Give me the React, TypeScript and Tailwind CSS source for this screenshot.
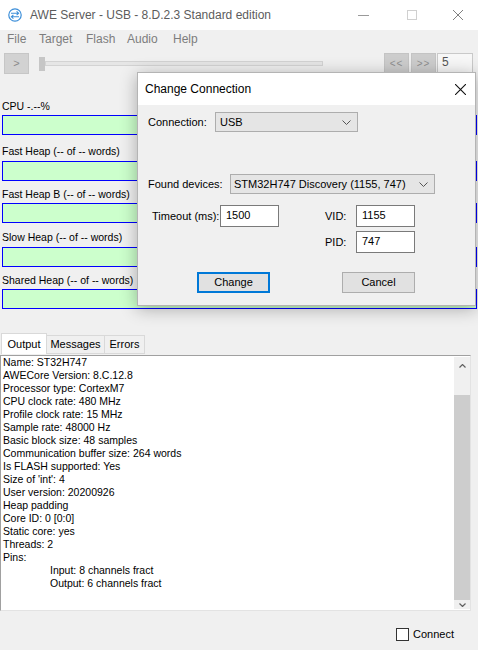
import React from "react";

const lines = [
  "Name: ST32H747",
  "AWECore Version: 8.C.12.8",
  "Processor type: CortexM7",
  "CPU clock rate: 480 MHz",
  "Profile clock rate: 15 MHz",
  "Sample rate: 48000 Hz",
  "Basic block size: 48 samples",
  "Communication buffer size: 264 words",
  "Is FLASH supported: Yes",
  "Size of 'int': 4",
  "User version: 20200926",
  "Heap padding",
  "Core ID: 0 [0:0]",
  "Static core: yes",
  "Threads: 2",
  "Pins:",
];

function Chevron() {
  return (
    <svg width="9" height="5" viewBox="0 0 9 5" className="shrink-0">
      <path d="M0.5 0.5 L4.5 4.5 L8.5 0.5" fill="none" stroke="#555" strokeWidth="1" />
    </svg>
  );
}

function Gauge({ label, labelMt, barMt }: { label: string; labelMt: string; barMt: string }) {
  return (
    <>
      <div className={`${labelMt} h-[14px] leading-[14px] pl-[2px] text-[10.5px] text-black`}>{label}</div>
      <div className={`${barMt} ml-[2px] w-[475px] h-[20px] bg-[#ccffcc] border border-[#0000ff]`} />
    </>
  );
}

export default function App() {
  return (
    <div className="relative w-[478px] h-[650px] bg-[#f0f0f0] overflow-hidden font-['Liberation_Sans',Arial,sans-serif] text-black">
      {/* Title bar */}
      <div className="h-[30px] bg-white flex items-center">
        <svg className="ml-[8px] shrink-0" width="14" height="14" viewBox="0 0 14 14">
          <circle cx="7" cy="7" r="6.2" fill="none" stroke="#3d8fd9" strokeWidth="1.2" />
          <path d="M3 5.3 H10.5 M8.6 3.4 L10.6 5.3 L8.6 7.1" fill="none" stroke="#3d8fd9" strokeWidth="1.1" />
          <path d="M11 8.8 H3.5 M5.4 6.9 L3.4 8.8 L5.4 10.6" fill="none" stroke="#3d8fd9" strokeWidth="1.1" />
        </svg>
        <span className="ml-[8px] text-[12px] text-[#5c5c5c] whitespace-nowrap">AWE Server - USB - 8.D.2.3 Standard edition</span>
        <div className="ml-auto flex items-center mr-[15px]">
          <svg width="11" height="10" viewBox="0 0 11 10">
            <path d="M0 5.5 H11" stroke="#9a9a9a" strokeWidth="1" />
          </svg>
          <svg className="ml-[38px]" width="10" height="10" viewBox="0 0 10 10">
            <rect x="0.5" y="0.5" width="9" height="9" fill="none" stroke="#d0d0d0" strokeWidth="1" />
          </svg>
          <svg className="ml-[36px]" width="10" height="10" viewBox="0 0 10 10">
            <path d="M0 0 L10 10 M10 0 L0 10" stroke="#808080" strokeWidth="1" />
          </svg>
        </div>
      </div>

      {/* Menu bar */}
      <div className="h-[18px] flex items-center pl-[7px] text-[12px] text-[#7d7d7d]">
        <span className="w-[32px]">File</span>
        <span className="w-[47px]">Target</span>
        <span className="w-[41px]">Flash</span>
        <span className="w-[46px]">Audio</span>
        <span>Help</span>
      </div>

      {/* Toolbar */}
      <div className="mt-[5px] h-[21px] flex items-center pl-[4px] pr-[5px]">
        <div className="w-[25px] h-[21px] bg-[#d2d2d2] border border-[#c6c6c6] flex items-center justify-center text-[11px] text-[#8a8a8a]">&gt;</div>
        <div className="ml-[10px] w-[6px] h-[14px] bg-[#c6c6c6]" />
        <div className="w-[278px] h-[5px] bg-[#e6e6e6] border border-[#d3d3d3]" />
        <div className="ml-auto flex items-center">
          <div className="w-[25px] h-[21px] bg-[#cdcdcd] border border-[#c4c4c4] flex items-center justify-center text-[10px] text-[#8f8f8f] tracking-[1px]">&lt;&lt;</div>
          <div className="ml-[2px] w-[25px] h-[21px] bg-[#cdcdcd] border border-[#c4c4c4] flex items-center justify-center text-[10px] text-[#8f8f8f] tracking-[1px]">&gt;&gt;</div>
          <div className="ml-[1px] w-[36px] h-[21px] bg-[#f7f7f7] border border-[#c9c9c9] pl-[4px] text-[12px] leading-[17px] text-[#555]">5</div>
        </div>
      </div>

      {/* Gauges */}
      <Gauge label="CPU -.--%" labelMt="mt-[25px]" barMt="mt-[2px]" />
      <Gauge label="Fast Heap (-- of -- words)" labelMt="mt-[9px]" barMt="mt-[3px]" />
      <Gauge label="Fast Heap B (-- of -- words)" labelMt="mt-[6px]" barMt="mt-[2px]" />
      <Gauge label="Slow Heap (-- of -- words)" labelMt="mt-[7px]" barMt="mt-[3px]" />
      <Gauge label="Shared Heap (-- of -- words)" labelMt="mt-[6px]" barMt="mt-[2px]" />

      {/* Tabs */}
      <div className="mt-[24px] h-[21px] flex items-end pl-[1px] text-[11px]">
        <div className="w-[46px] h-[21px] bg-white border border-b-0 border-[#d9d9d9] flex items-center justify-center">Output</div>
        <div className="w-[58px] h-[19px] bg-[#f0f0f0] border border-l-0 border-[#d9d9d9] flex items-center justify-center">Messages</div>
        <div className="w-[40px] h-[19px] bg-[#f0f0f0] border border-l-0 border-[#d9d9d9] flex items-center justify-center">Errors</div>
      </div>

      {/* Output text box */}
      <div className="mt-[1px] w-[471px] h-[256px] bg-white border border-[#a0a0a0] border-r-[#e3e3e3] border-b-[#e3e3e3] flex">
        <div className="flex-1 pl-[2px] text-[10.5px] leading-[13px] whitespace-nowrap">
          {lines.map((l) => (
            <div key={l}>{l}</div>
          ))}
          <div className="pl-[47px]">Input: 8 channels fract</div>
          <div className="pl-[47px]">Output: 6 channels fract</div>
        </div>
        <div className="w-[16px] my-[1px] bg-[#f0f0f0] flex flex-col">
          <div className="h-[18px] flex items-center justify-center">
            <svg width="7" height="4" viewBox="0 0 7 4">
              <path d="M0.5 3.5 L3.5 0.5 L6.5 3.5" fill="none" stroke="#606060" strokeWidth="1.2" />
            </svg>
          </div>
          <div className="h-[20px]" />
          <div className="h-[205px] bg-[#cdcdcd]" />
          <div className="flex-1 flex items-center justify-center">
            <svg width="7" height="4" viewBox="0 0 7 4">
              <path d="M0.5 0.5 L3.5 3.5 L6.5 0.5" fill="none" stroke="#606060" strokeWidth="1.2" />
            </svg>
          </div>
        </div>
      </div>

      {/* Connect */}
      <div className="mt-[15px] pl-[396px] flex items-center">
        <div className="w-[13px] h-[13px] bg-white border border-[#333]" />
        <span className="ml-[4px] text-[11px]">Connect</span>
      </div>

      {/* Dialog */}
      <div className="absolute left-[137px] top-[72px] w-[339px] h-[234px] bg-[#f0f0f0] border border-[#b4b4b4] shadow-[0_3px_16px_rgba(0,0,0,0.3)] flex flex-col">
        <div className="h-[32px] bg-white flex items-center pl-[7px] pr-[9px]">
          <span className="text-[12px]">Change Connection</span>
          <svg className="ml-auto" width="11" height="11" viewBox="0 0 11 11">
            <path d="M0 0 L11 11 M11 0 L0 11" stroke="#111" strokeWidth="1.1" />
          </svg>
        </div>
        <div className="text-[11px]">
          <div className="mt-[7px] pl-[10px] flex items-center">
            <span className="w-[67px]">Connection:</span>
            <div className="w-[143px] h-[20px] bg-[#e5e5e5] border border-[#adadad] flex items-center pl-[4px] pr-[6px]">
              <span>USB</span>
              <span className="ml-auto"><Chevron /></span>
            </div>
          </div>
          <div className="mt-[42px] pl-[10px] flex items-center">
            <span className="w-[82px]">Found devices:</span>
            <div className="w-[205px] h-[20px] bg-[#e5e5e5] border border-[#adadad] flex items-center pl-[3px] pr-[6px]">
              <span className="whitespace-nowrap">STM32H747 Discovery (1155, 747)</span>
              <span className="ml-auto"><Chevron /></span>
            </div>
          </div>
          <div className="mt-[11px] pl-[14px] flex items-start">
            <div className="flex items-center">
              <span className="w-[68px]">Timeout (ms):</span>
              <div className="w-[59px] h-[22px] bg-white border border-[#7a7a7a] pl-[5px] leading-[18px]">1500</div>
            </div>
            <div className="ml-[46px] flex flex-col gap-[4px]">
              <div className="flex items-center">
                <span className="w-[31px]">VID:</span>
                <div className="w-[59px] h-[22px] bg-white border border-[#7a7a7a] pl-[5px] leading-[18px]">1155</div>
              </div>
              <div className="flex items-center">
                <span className="w-[31px]">PID:</span>
                <div className="w-[59px] h-[22px] bg-white border border-[#7a7a7a] pl-[5px] leading-[18px]">747</div>
              </div>
            </div>
          </div>
          <div className="mt-[19px] pl-[59px] flex items-center">
            <div className="w-[73px] h-[21px] bg-[#e1e1e1] border-2 border-[#0078d7] flex items-center justify-center">Change</div>
            <div className="ml-[72px] w-[73px] h-[21px] bg-[#e1e1e1] border border-[#adadad] flex items-center justify-center">Cancel</div>
          </div>
        </div>
      </div>
    </div>
  );
}
